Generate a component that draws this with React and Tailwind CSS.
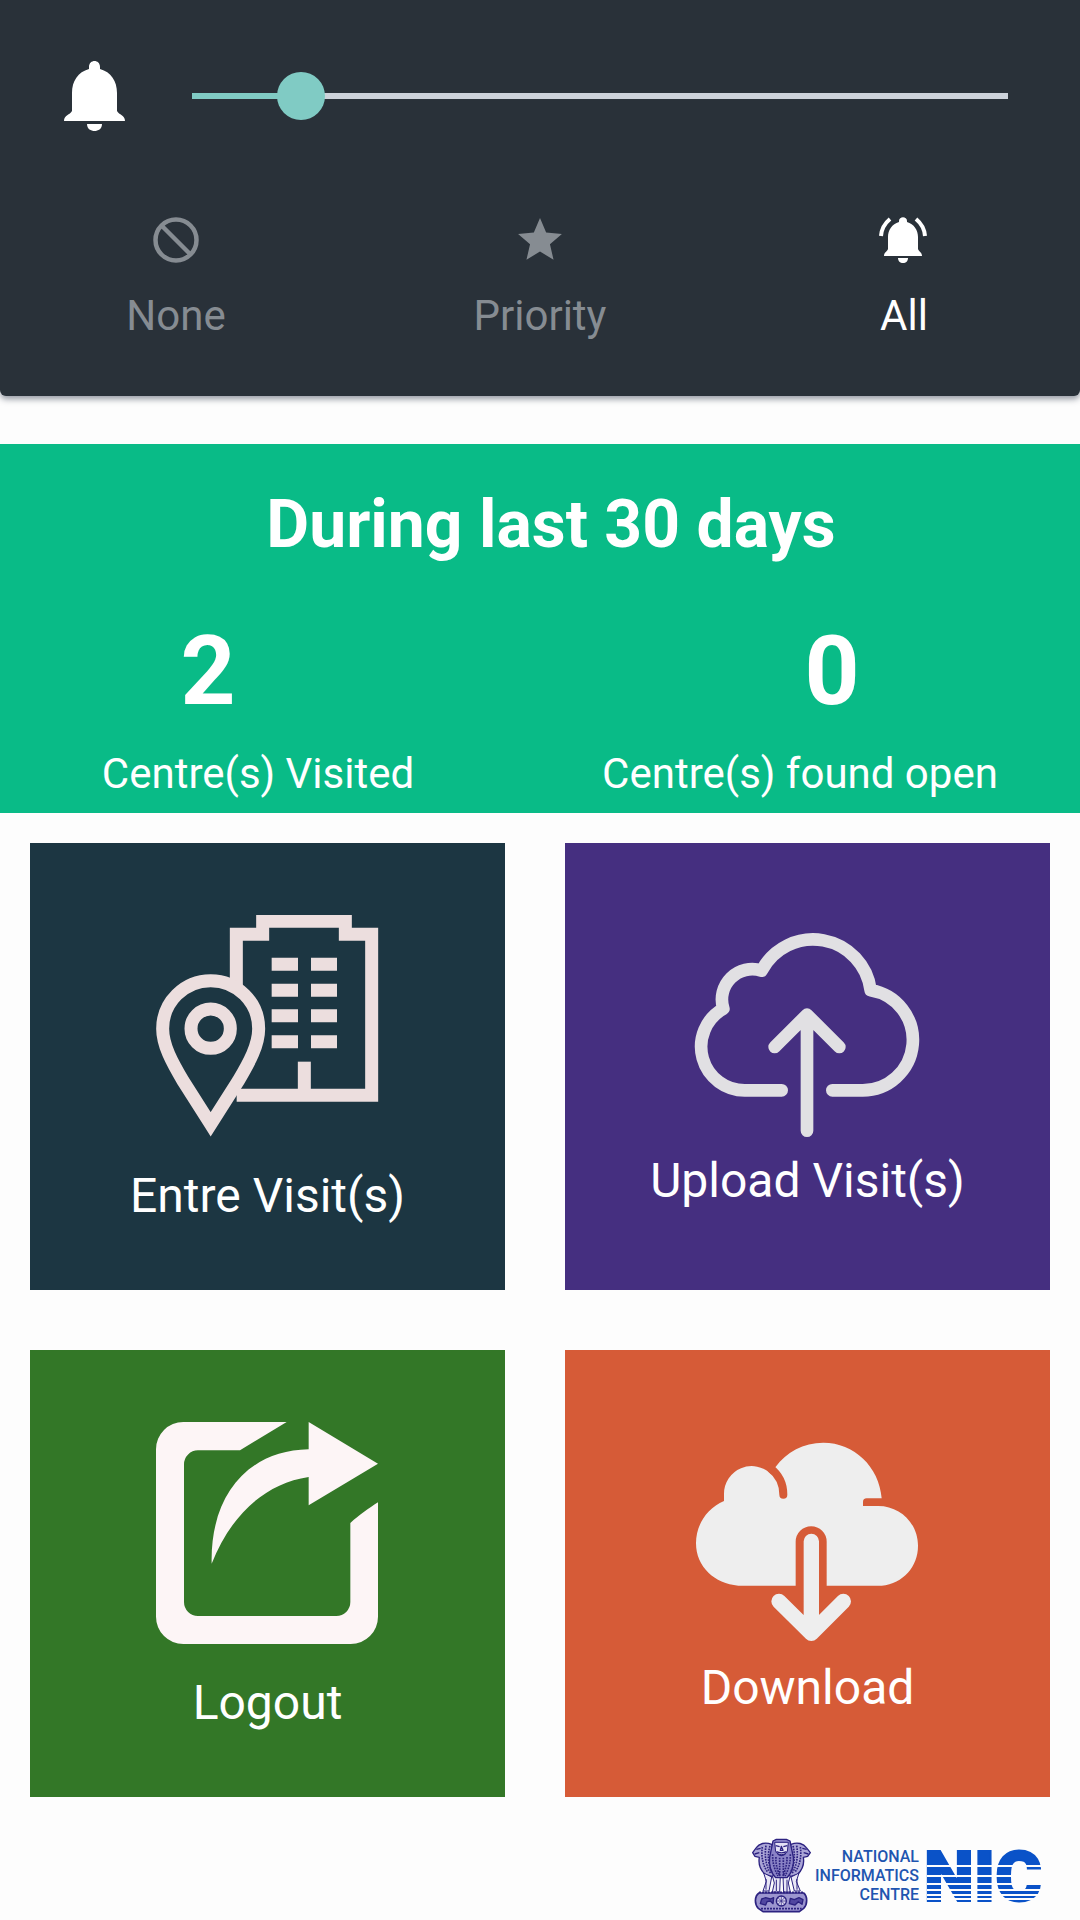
import { useState } from "react";

function BellIcon() {
  return (
    <svg viewBox="0 0 61 70" className="h-[70px] w-[61px] shrink-0" fill="#fff" aria-hidden="true">
      <path d="M25 6C25-2 36-2 36 6V8C47 11 53 20 53 32V50C55 54 61 54 61 60H0C0 54 6 54 8 50V32C8 20 14 11 25 8Z" />
      <path d="M23 63H38C38 68 34 70 30.500 70S23 68 23 63Z" />
    </svg>
  );
}

function NoneIcon() {
  return (
    <svg viewBox="0 0 46 46" className="size-[46px]" fill="none" stroke="currentColor" aria-hidden="true">
      <circle cx="23" cy="23" r="20.500" strokeWidth="4.500" />
      <path d="M9 9L37 37" strokeWidth="4.500" />
    </svg>
  );
}

function StarIcon() {
  return (
    <svg viewBox="1.500 1.500 21 21" className="size-[46px]" fill="currentColor" aria-hidden="true">
      <path d="M12 17.270L18.180 21l-1.640-7.030L22 9.240l-7.190-.610L12 2 9.190 8.630 2 9.240l5.460 4.730L5.820 21z" />
    </svg>
  );
}

function RingingBellIcon() {
  return (
    <svg viewBox="1 0 48 46" className="h-[46px] w-12 overflow-visible" fill="currentColor" aria-hidden="true">
      <path d="M20 4C20-1 28-1 28 4V5C35 7 39 13 39 20V32C40 35 43 35 43 39H5C5 35 8 35 9 32V20C9 13 13 7 20 5Z" />
      <path d="M19 41H29C29 44 27 46 24 46S19 44 19 41Z" />
      <g fill="none" stroke="currentColor" strokeWidth="4">
        <path d="M11 2C5 7 2.500 12 2 19" />
        <path d="M37 2C43 7 45.500 12 46 19" />
      </g>
    </svg>
  );
}

function VisitIcon() {
  return (
    <svg viewBox="78 75 669 666" className="h-[222px] w-[223px]" fill="none" stroke="#ecdede" strokeWidth="39" aria-hidden="true">
      <path d="M319 285V133H398V94H646V133H725V616H320" />
      <path d="M523 515V600" />
      <path d="M425 222.500H504M543 222.500H621M425 300.500H504M543 300.500H621M425 377.500H504M543 377.500H621M425 455.500H504M543 455.500H621" />
      <path d="M242 703L160 574C125 515 98 465 98 416A144 144 0 0 1 386 416C386 465 359 515 324 574Z" />
      <circle cx="242" cy="416" r="59" />
    </svg>
  );
}

function UploadIcon() {
  return (
    <svg
      viewBox="78 73 669 666"
      className="h-[222px] w-[223px] overflow-visible"
      fill="none"
      stroke="#e1e0e3"
      strokeWidth="38"
      strokeLinecap="round"
      strokeLinejoin="round"
      aria-hidden="true"
    >
      <path d="M335 572H228A131 131 0 0 1 160 327A91 91 0 0 1 275 213A174 174 0 0 1 602 272A151 151 0 0 1 575 572H487" />
      <path d="M411 345V693M314 442L411 345L508 442" />
    </svg>
  );
}

function LogoutIcon() {
  return (
    <svg viewBox="78 65 669 666" className="h-[222px] w-[223px]" fill="#fdf5f6" aria-hidden="true">
      <path d="M470 65H160A82 82 0 0 0 78 147V649A82 82 0 0 0 160 731H662A82 82 0 0 0 744 649V306C715 325 690 342 661 368V605A42 42 0 0 1 619 647H204A42 42 0 0 1 162 605V192A42 42 0 0 1 204 150H330Z" />
      <path d="M536 65L744 190L536 315V230C400 250 300 350 245 490C240 290 350 150 536 147Z" />
    </svg>
  );
}

function DownloadIcon() {
  return (
    <svg viewBox="78 33 669 666" className="h-[222px] w-[223px]" fill="#eeeeee" aria-hidden="true">
      <path d="M377 497H205C134 492 78 440 78 370C78 315 110 265 162 243V222A83 83 0 0 1 304 163L316 142C350 95 400 68 460 68C552 68 628 140 635 235H590Q579 235 579 246V258H625C690 258 744 310 744 377C744 440 700 490 635 497H470V365A46.500 46.500 0 0 0 377 365Z" />
      <path d="M300 144Q340 174 340 224" fill="none" stroke="#d65b37" strokeWidth="24" strokeLinecap="round" />
      <path
        d="M424 364V640M327 544L424 640L520 544"
        fill="none"
        stroke="#eeeeee"
        strokeWidth="46"
        strokeLinecap="round"
        strokeLinejoin="round"
      />
    </svg>
  );
}

function Emblem() {
  return (
    <svg viewBox="33 55 177 225" className="h-[75px] w-[59px]" stroke="#2c2280" strokeWidth="4" strokeLinejoin="round" aria-hidden="true">
      <g fill="#aaa5d6">
        <path d="M92 74C72 66 54 72 46 84L35 99L42 110L55 113C52 130 58 150 72 164L98 172L108 120Z" />
        <path d="M150 74C170 66 188 72 196 84L208 99L200 110L187 113C190 130 184 150 170 164L144 172L134 120Z" />
      </g>
      <g fill="#e9e7f6" strokeWidth="3">
        <path d="M68 160L76 185L66 214H84L92 172ZM94 168L100 190L94 217H116L118 170ZM126 170L128 217H148L142 190L148 168ZM174 160L166 185L178 214H160L150 172Z" />
      </g>
      <path fill="#8a83c6" d="M96 64L106 59H136L147 64L151 84L157 112C160 140 150 162 138 174H104C90 160 83 138 86 112L92 84Z" />
      <path fill="#e4e1f5" strokeWidth="3" d="M101 68H142L139 96C133 108 110 108 104 96Z" />
      <g fill="none" strokeWidth="4">
        <path d="M104 78L116 81M139 78L127 81M121 80L118 92H126ZM106 96Q121 103 137 96M110 103Q121 112 133 103" />
        <path d="M46 89L59 86M41 103L55 99M197 89L184 86M202 103L188 99" />
      </g>
      <g fill="none" strokeWidth="5" strokeDasharray="5 3">
        <path d="M64 82C60 108 65 138 80 157M75 78C70 108 74 138 90 163M87 79C78 108 82 138 94 159M178 82C182 108 177 138 162 157M167 78C172 108 168 138 152 163M156 79C164 108 160 138 148 159" />
        <path d="M95 104C94 132 102 152 111 169M105 112C103 132 110 154 117 169M116 114V169M127 114V169M138 112C139 132 132 154 126 169M148 104C149 132 141 152 132 169" />
      </g>
      <path fill="none" strokeWidth="3" d="M75 178V210M106 180V214M138 180V214M168 178V210" />
      <path fill="#9b95cf" strokeWidth="5" d="M54 220H188C200 230 200 254 188 266L175 276H66L52 266C40 254 40 230 54 220Z" />
      <path fill="none" strokeWidth="5" strokeDasharray="6 3" d="M54 218H188M60 267H182" />
      <circle cx="121" cy="244" r="15" fill="#d9d6ef" />
      <path fill="none" strokeWidth="2" d="M121 229V259M106 244H136M110 233L132 255M132 233L110 255" />
      <path fill="#5147a0" d="M58 252L62 238L74 234L88 238L98 234L96 252L88 244L78 246L74 256ZM145 252L148 236L160 240L174 234L186 240L183 254L172 246L162 256Z" />
    </svg>
  );
}

function NicMark() {
  return (
    <svg viewBox="0 0 120 54" className="h-[54px] w-[120px] overflow-visible" role="img" aria-label="NIC">
      <text x="-3" y="52" fill="#0a52c8" stroke="#0a52c8" strokeWidth="2" fontFamily="Roboto" fontWeight="900" fontSize="71">
        NIC
      </text>
      <g fill="#fdfdfd">
        <rect y="16" width="122" height="2" />
        <rect y="26" width="122" height="2" />
        <rect y="34" width="122" height="2" />
        <rect y="40" width="122" height="2" />
        <rect y="45" width="122" height="2" />
        <rect y="49" width="122" height="2" />
      </g>
    </svg>
  );
}

const modes = [
  { name: "None", Icon: NoneIcon },
  { name: "Priority", Icon: StarIcon },
  { name: "All", Icon: RingingBellIcon },
];

function VolumePanel() {
  const [volume, setVolume] = useState(2);
  const [mode, setMode] = useState("All");
  return (
    <section className="overflow-hidden rounded-b-md bg-[#293139] pt-[61px] pb-14 shadow-[0_3px_6px_rgba(40,50,70,0.5)]">
      <div className="flex items-center pr-[72px] pl-16">
        <BellIcon />
        <div className="ml-[67px] grid flex-1 items-center">
          <div className="col-start-1 row-start-1 h-1.5 bg-[#ccd2da]">
            <div className="h-full bg-[#80cbc4]" style={{ width: `${(volume / 15) * 100}%` }} />
          </div>
          <input
            type="range"
            min="0"
            max="15"
            value={volume}
            onChange={(e) => setVolume(Number(e.target.value))}
            aria-label="Notification volume"
            className="col-start-1 row-start-1 -mx-6 h-12 appearance-none bg-transparent outline-none [&::-webkit-slider-thumb]:size-12 [&::-webkit-slider-thumb]:appearance-none [&::-webkit-slider-thumb]:rounded-full [&::-webkit-slider-thumb]:bg-[#80cbc4]"
          />
        </div>
      </div>
      <div className="-mx-1.5 mt-[86px] grid grid-cols-3">
        {modes.map(({ name, Icon }) => (
          <button
            key={name}
            type="button"
            aria-pressed={mode === name}
            onClick={() => setMode(name)}
            className={`flex flex-col items-center gap-7 text-[42px] leading-[49px] ${mode === name ? "text-white" : "text-[#868c92]"}`}
          >
            <Icon />
            {name}
          </button>
        ))}
      </div>
    </section>
  );
}

function Summary() {
  return (
    <section className="mt-12 bg-[#09bb87] pt-[42px] pb-[15px] text-center text-white">
      <h1 className="pl-[22px] text-[66px] leading-[78px] font-bold">During last 30 days</h1>
      <div className="mt-[51px] grid grid-cols-2">
        <div>
          <p className="pr-[124px] text-[96px] leading-[112px] font-bold">2</p>
          <p className="mt-[22px] pr-6 text-[42px] leading-[49px]">Centre(s) Visited</p>
        </div>
        <div>
          <p className="pl-11 text-[96px] leading-[112px] font-bold">0</p>
          <p className="mt-[22px] pr-5 text-[42px] leading-[49px]">Centre(s) found open</p>
        </div>
      </div>
    </section>
  );
}

const tiles = [
  { label: "Entre Visit(s)", Icon: VisitIcon, look: "bg-[#1c3642] pt-[72px] pb-[66px] gap-[31px]" },
  { label: "Upload Visit(s)", Icon: UploadIcon, look: "bg-[#452f80] pt-[81px] pb-[81px] gap-[7px]" },
  { label: "Logout", Icon: LogoutIcon, look: "bg-[#337727] pt-[72px] pb-[66px] gap-[31px]" },
  { label: "Download", Icon: DownloadIcon, look: "bg-[#d65b37] pt-[81px] pb-[81px] gap-[7px]" },
];

export default function App() {
  return (
    <div className="min-h-screen bg-[#fdfdfd] font-[Roboto,sans-serif]">
      <VolumePanel />
      <main>
        <Summary />
        <nav className="mt-[30px] grid grid-cols-[475fr_485fr] gap-[60px] px-[30px]">
          {tiles.map(({ label, Icon, look }) => (
            <button key={label} type="button" className={`flex flex-col items-center text-5xl leading-[56px] text-white ${look}`}>
              <Icon />
              {label}
            </button>
          ))}
        </nav>
      </main>
      <footer className="mt-[41px] flex items-center justify-end pr-[33px]">
        <Emblem />
        <p className="ml-1 text-right text-base leading-[19px] font-medium text-[#1f55b0]">
          NATIONAL
          <br />
          INFORMATICS
          <br />
          CENTRE
        </p>
        <div className="ml-2">
          <NicMark />
        </div>
      </footer>
    </div>
  );
}
